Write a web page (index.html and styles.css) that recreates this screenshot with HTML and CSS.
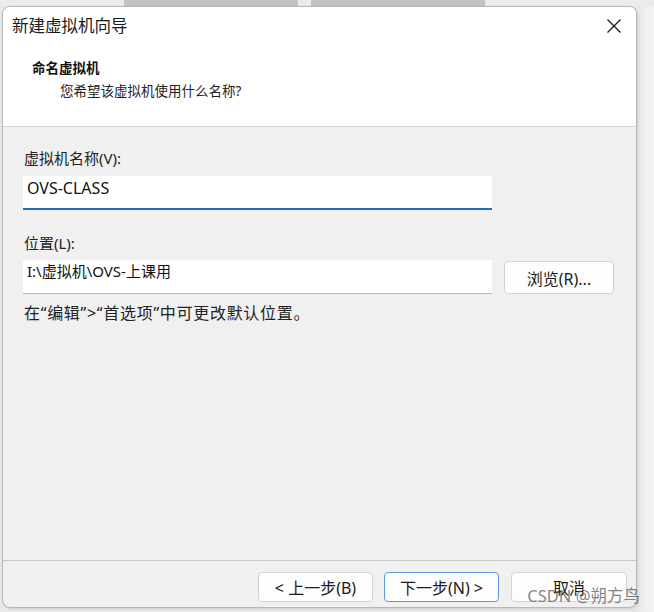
FILE: index.html
```html
<!DOCTYPE html>
<html lang="zh-CN">
<head>
<meta charset="utf-8">
<title>新建虚拟机向导</title>
<link rel="stylesheet" href="styles.css">
</head>
<body>
<div class="backdrop">
  <div class="strip">
    <div class="strip-block"></div>
    <div class="strip-block"></div>
  </div>
  <div class="dialog">
    <div class="header">
      <div class="titlebar">
        <span class="title">新建虚拟机向导</span>
        <svg class="close" width="16" height="16" viewBox="0 0 16 16" aria-label="关闭">
          <path d="M1.5 1.5 L14.5 14.5 M14.5 1.5 L1.5 14.5" stroke="#1a1a1a" stroke-width="1.3" fill="none"/>
        </svg>
      </div>
      <div class="heading">命名虚拟机</div>
      <div class="subheading">您希望该虚拟机使用什么名称?</div>
    </div>
    <div class="content">
      <div class="label first">虚拟机名称(V):</div>
      <div class="input focused">OVS-CLASS</div>
      <div class="label second">位置(L):</div>
      <div class="row">
        <div class="input plain">I:\虚拟机\OVS-上课用</div>
        <button class="btn browse">浏览(R)...</button>
      </div>
      <div class="hint">在“编辑”&gt;“首选项”中可更改默认位置。</div>
    </div>
    <div class="footer">
      <button class="btn nav">&lt; 上一步(B)</button>
      <button class="btn nav primary">下一步(N) &gt;</button>
      <button class="btn nav cancel">取消</button>
    </div>
  </div>
  <div class="watermark">CSDN @朔方鸟</div>
</div>
</body>
</html>
```

FILE: styles.css
```css
html, body {
  margin: 0;
  padding: 0;
}
body {
  width: 654px;
  height: 612px;
  overflow: hidden;
  background: linear-gradient(to right, #e9e9e9 0, #e9e9e9 640px, #f0f0f0 646px, #f3f3f3 654px);
  font-family: "Noto Sans", "Noto Sans CJK SC", sans-serif;
  color: #1b1b1b;
}
.backdrop {
  position: relative;
  width: 654px;
  height: 612px;
}
.strip {
  height: 6px;
  display: flex;
  gap: 13px;
  padding-left: 124px;
  background: #ebebeb;
}
.strip-block {
  width: 174px;
  height: 6px;
  background: #c3c3c3;
}
.dialog {
  position: relative;
  margin-left: 2px;
  width: 635px;
  height: 602px;
  box-sizing: border-box;
  border: 1px solid #b8b8b8;
  border-radius: 8px;
  overflow: hidden;
  background: #f0f0f0;
  display: flex;
  flex-direction: column;
  box-shadow: 1px 1px 3px rgba(0,0,0,0.12);
}
.header {
  background: #ffffff;
  height: 119px;
  border-bottom: 1px solid #d6d6d6;
  display: flex;
  flex-direction: column;
}
.titlebar {
  height: 38px;
  display: flex;
  align-items: center;
  justify-content: space-between;
  padding-left: 9px;
  padding-right: 14px;
}
.title {
  font-size: 16.5px;
  line-height: 20px;
  color: #1a1a1a;
}
.close {
  display: block;
}
.heading {
  margin-top: 13px;
  padding-left: 29px;
  font-size: 13.5px;
  line-height: 20px;
  font-weight: 700;
  color: #111;
}
.subheading {
  margin-top: 3px;
  padding-left: 57px;
  font-size: 13.5px;
  line-height: 20px;
  color: #222;
}
.content {
  flex: 1;
  display: flex;
  flex-direction: column;
  padding-left: 20px;
  border-bottom: 1px solid #c6c6c6;
}
.label {
  padding-left: 1px;
  font-size: 15px;
  line-height: 20px;
  color: #222;
}
.label.first {
  margin-top: 21px;
}
.label.second {
  margin-top: 23px;
}
.input {
  box-sizing: border-box;
  width: 469px;
  height: 34px;
  background: #ffffff;
  padding-left: 4px;
  font-size: 16px;
  line-height: 24px;
  color: #111;
}
.input.focused {
  margin-top: 8px;
  border-bottom: 2px solid #1f6dbd;
}
.input.plain {
  border-bottom: 1px solid #b9b9b9;
  font-size: 15px;
  line-height: 22px;
}
.row {
  margin-top: 7px;
  display: flex;
  align-items: flex-start;
  gap: 12px;
}
.btn {
  box-sizing: border-box;
  font-family: "Noto Sans", "Noto Sans CJK SC", sans-serif;
  background: #fdfdfd;
  border: 1px solid #d3d3d3;
  border-radius: 4px;
  color: #1b1b1b;
  font-size: 16px;
  padding: 0;
}
.browse {
  margin-top: 1px;
  width: 110px;
  height: 33px;
}
.hint {
  margin-top: 9px;
  padding-left: 1px;
  font-size: 16px;
  line-height: 20px;
  letter-spacing: 0.7px;
  color: #222;
}
.footer {
  height: 46px;
  display: flex;
  justify-content: flex-end;
  align-items: flex-start;
  padding-top: 11px;
  padding-right: 9px;
  box-sizing: border-box;
  gap: 11px;
}
.nav {
  width: 115px;
  height: 30px;
}
.nav.primary {
  border-color: #5b9bdc;
}
.nav.cancel {
  width: 116px;
  margin-left: 1px;
}
.watermark {
  position: absolute;
  right: 14px;
  bottom: 7px;
  font-size: 16.5px;
  line-height: 18px;
  color: rgba(90, 90, 90, 0.75);
}
```
